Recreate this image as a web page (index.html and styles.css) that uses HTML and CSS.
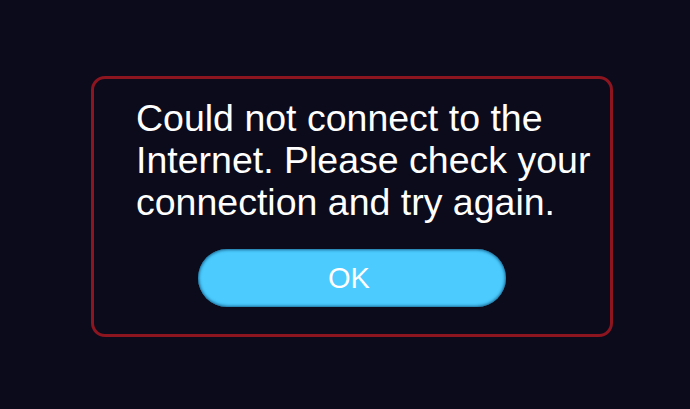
FILE: index.html
```html
<!DOCTYPE html>
<html>
<head>
<meta charset="utf-8">
<link rel="stylesheet" href="styles.css">
</head>
<body>
<div class="dialog">
  <p class="message">Could not connect to the Internet. Please check your connection and try again.</p>
  <button class="ok">OK</button>
</div>
</body>
</html>
```
FILE: styles.css
```css
html, body {
  margin: 0;
  padding: 0;
  width: 690px;
  height: 409px;
  background: #0b0b1b;
  overflow: hidden;
}
body {
  padding-top: 76px;
  padding-left: 91px;
  box-sizing: border-box;
  font-family: "Liberation Sans", Arial, sans-serif;
}
.dialog {
  width: 522px;
  height: 261px;
  box-sizing: border-box;
  border: 3px solid #8c1520;
  border-radius: 14px;
  padding: 18px 0 0 42px;
  display: flex;
  flex-direction: column;
}
.message {
  margin: 0;
  color: #ffffff;
  font-size: 37.5px;
  line-height: 42px;
}
.ok {
  flex-shrink: 0;
  align-self: flex-start;
  margin-top: 26px;
  margin-left: 62px;
  width: 308px;
  height: 58px;
  border: none;
  border-radius: 29px;
  background: #4bcbfe;
  box-shadow: inset 0 0 3px 1px rgba(10, 70, 110, 0.75);
  color: #ffffff;
  font-family: "Liberation Sans", Arial, sans-serif;
  font-size: 29px;
  padding: 0 6px 0 0;
  display: flex;
  align-items: center;
  justify-content: center;
}
```
